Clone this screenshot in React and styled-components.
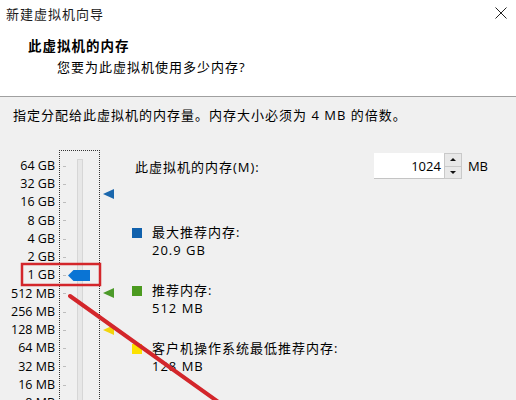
import styled, { createGlobalStyle } from 'styled-components';

const GlobalStyle = createGlobalStyle`
  html, body {
    margin: 0;
    padding: 0;
    background: #f0f0f0;
  }
  body {
    font-family: "Open Sans", "Noto Sans CJK SC", sans-serif;
    color: #000;
  }
`;

const ROW = 18.25;
const SCALE = ['64 GB', '32 GB', '16 GB', '8 GB', '4 GB', '2 GB', '1 GB', '512 MB', '256 MB', '128 MB', '64 MB', '32 MB', '16 MB', '8 MB'];

const Window = styled.div`
  position: relative;
  width: 516px;
  height: 400px;
  overflow: hidden;
  background: #f0f0f0;
`;

const Header = styled.div`
  height: 96px;
  background: #fff;
  border-bottom: 1px solid #a0a0a0;
`;

const TitleBar = styled.div`
  height: 26px;
  display: flex;
  align-items: center;
  justify-content: space-between;
  padding: 0 8px 0 6px;
`;

const Title = styled.span`
  font-size: 13px;
  letter-spacing: 1px;
  color: #1a1a1a;
`;

const CloseButton = styled.span`
  display: flex;
  width: 14px;
  height: 14px;
  align-items: center;
  justify-content: center;
`;

const Heading = styled.div`
  margin-top: 10px;
  padding-left: 28px;
  line-height: 20px;
  font-size: 13.5px;
  font-weight: bold;
  letter-spacing: 1px;
`;

const SubHeading = styled.div`
  margin-top: 1px;
  padding-left: 57px;
  line-height: 20px;
  font-size: 13px;
  letter-spacing: 1px;
`;

const Body = styled.div`
  padding-top: 8px;
`;

const Instruction = styled.div`
  padding-left: 13px;
  line-height: 20px;
  font-size: 13px;
  letter-spacing: 1px;
`;

const Content = styled.div`
  display: flex;
  margin-top: 25px;
`;

const SliderArea = styled.div`
  display: flex;
  align-items: flex-start;
`;

const LabelList = styled.div`
  width: 55px;
  margin-right: 4px;
  padding-top: ${16 - ROW / 2}px;
  display: flex;
  flex-direction: column;
  align-items: flex-end;
`;

const ScaleLabel = styled.span`
  height: ${ROW}px;
  line-height: ${ROW}px;
  font-size: 12.5px;
  white-space: nowrap;
`;

const FocusBox = styled.div`
  position: relative;
  width: 39px;
  height: 270px;
  border: 1px dotted #333;
  border-bottom: none;
`;

const TickList = styled.div`
  position: absolute;
  left: 3px;
  top: ${15 - ROW / 2}px;
  display: flex;
  flex-direction: column;
`;

const Tick = styled.div`
  height: ${ROW}px;
  display: flex;
  align-items: center;
  &::before {
    content: '';
    width: 3px;
    height: 1px;
    background: #bdbdbd;
  }
`;

const Track = styled.div`
  position: absolute;
  left: 17px;
  top: 8px;
  bottom: 0;
  width: 4px;
  background: #e7e7e7;
  border: 1px solid #d6d6d6;
  border-bottom: none;
`;

const Thumb = styled.svg`
  position: absolute;
  left: 8px;
  top: ${({ $center }) => $center - 5}px;
`;

const MarkerColumn = styled.div`
  position: relative;
  width: 13px;
  height: 250px;
  margin-left: 3px;
`;

const Marker = styled.div`
  position: absolute;
  left: 0;
  width: 0;
  height: 0;
  border-top: 5px solid transparent;
  border-bottom: 5px solid transparent;
  border-right: 11px solid ${({ $color }) => $color};
`;

const Info = styled.div`
  flex: 1;
  margin-left: 15px;
  padding-right: 28px;
  display: flex;
  flex-direction: column;
`;

const MemoryRow = styled.div`
  height: 32px;
  display: flex;
  align-items: center;
  padding-left: 4px;
`;

const RowLabel = styled.span`
  flex: 1;
  font-size: 13px;
  letter-spacing: 1px;
`;

const SpinBox = styled.div`
  display: flex;
  align-items: stretch;
  height: 26px;
`;

const SpinInput = styled.div`
  width: 67px;
  padding-right: 3px;
  background: #fff;
  border-bottom: 1px solid #c4c4c4;
  display: flex;
  align-items: center;
  justify-content: flex-end;
  font-size: 13px;
`;

const SpinButtons = styled.div`
  width: 18px;
  display: flex;
  flex-direction: column;
  gap: 1px;
  background: #c9c9c9;
  padding: 1px;
  box-sizing: border-box;
`;

const SpinButton = styled.div`
  flex: 1;
  background: #e8e8e8;
  display: flex;
  align-items: center;
  justify-content: center;
  &::before {
    content: '';
    border-left: 3px solid transparent;
    border-right: 3px solid transparent;
    ${({ $down }) => ($down ? 'border-top: 3px solid #111;' : 'border-bottom: 3px solid #111;')}
  }
`;

const Unit = styled.span`
  margin-left: 6px;
  align-self: center;
  font-size: 13px;
`;

const Legend = styled.div`
  display: flex;
  align-items: flex-start;
  margin-top: ${({ $first }) => ($first ? 41 : 22)}px;
`;

const Swatch = styled.div`
  width: 10px;
  height: 10px;
  margin: 5px 10px 0 1px;
  background: ${({ $color }) => $color};
`;

const LegendText = styled.div`
  display: flex;
  flex-direction: column;
  line-height: 18px;
  font-size: 13px;
  letter-spacing: 1px;
`;

const Annotation = styled.svg`
  position: absolute;
  left: 0;
  top: 0;
  pointer-events: none;
`;

const legends = [
  { color: '#1061ad', title: '最大推荐内存:', value: '20.9 GB' },
  { color: '#4b9a1f', title: '推荐内存:', value: '512 MB' },
  { color: '#fce100', title: '客户机操作系统最低推荐内存:', value: '128 MB' },
];

const markers = [
  { color: '#1a67ad', center: 44 },
  { color: '#4c9a2a', center: 143 },
  { color: '#f2d50c', center: 180 },
];

export default function App() {
  return (
    <>
      <GlobalStyle />
      <Window>
        <Header>
          <TitleBar>
            <Title>新建虚拟机向导</Title>
            <CloseButton>
              <svg width="12" height="12" viewBox="0 0 12 12">
                <path d="M0.5 0.5 L11.5 11.5 M11.5 0.5 L0.5 11.5" stroke="#222" strokeWidth="1" />
              </svg>
            </CloseButton>
          </TitleBar>
          <Heading>此虚拟机的内存</Heading>
          <SubHeading>您要为此虚拟机使用多少内存?</SubHeading>
        </Header>
        <Body>
          <Instruction>指定分配给此虚拟机的内存量。内存大小必须为 4 MB 的倍数。</Instruction>
          <Content>
            <SliderArea>
              <LabelList>
                {SCALE.map((s) => (
                  <ScaleLabel key={s}>{s}</ScaleLabel>
                ))}
              </LabelList>
              <FocusBox>
                <TickList>
                  {SCALE.map((s) => (
                    <Tick key={s} />
                  ))}
                </TickList>
                <Track />
                <Thumb $center={124} width="23" height="11" viewBox="0 0 23 11">
                  <path d="M0 5.5 L5.5 0 H22 V11 H5.5 Z" fill="#0a74d4" />
                </Thumb>
              </FocusBox>
              <MarkerColumn>
                {markers.map((m) => (
                  <Marker key={m.color} $color={m.color} style={{ top: m.center - 5 }} />
                ))}
              </MarkerColumn>
            </SliderArea>
            <Info>
              <MemoryRow>
                <RowLabel>此虚拟机的内存(M):</RowLabel>
                <SpinBox>
                  <SpinInput>1024</SpinInput>
                  <SpinButtons>
                    <SpinButton />
                    <SpinButton $down />
                  </SpinButtons>
                </SpinBox>
                <Unit>MB</Unit>
              </MemoryRow>
              {legends.map((l, i) => (
                <Legend key={l.title} $first={i === 0}>
                  <Swatch $color={l.color} />
                  <LegendText>
                    <span>{l.title}</span>
                    <span>{l.value}</span>
                  </LegendText>
                </Legend>
              ))}
            </Info>
          </Content>
        </Body>
        <Annotation width="516" height="400" viewBox="0 0 516 400">
          <rect x="22" y="264" width="78" height="21" fill="none" stroke="#d3262b" strokeWidth="2.5" />
          <path d="M70 296 L224 406" stroke="#d3262b" strokeWidth="4" strokeLinecap="round" />
        </Annotation>
      </Window>
    </>
  );
}
